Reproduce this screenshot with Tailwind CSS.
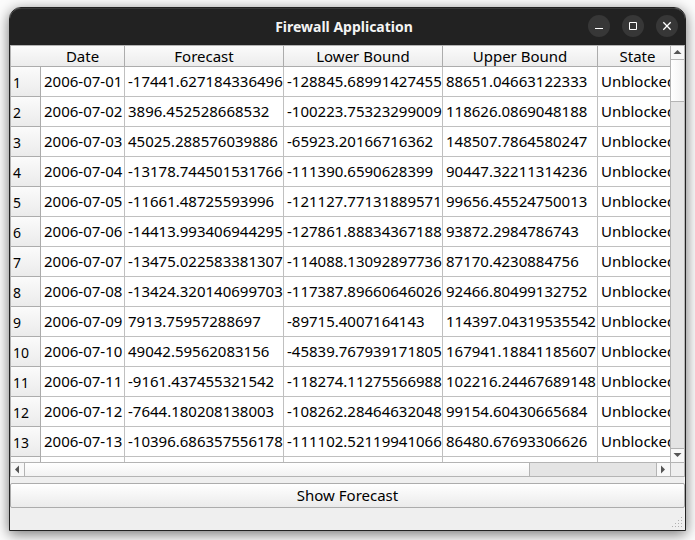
<!DOCTYPE html>
<html lang="en">
<head>
<meta charset="utf-8">
<title>Firewall Application</title>
<script src="https://cdn.jsdelivr.net/npm/@tailwindcss/browser@4"></script>
</head>
<body class="h-screen overflow-hidden bg-[#fcfcfc] pt-[7px] pr-[9px] pb-[9px] pl-[9px] font-['Noto_Sans',sans-serif] text-[15px] leading-5 text-black">
<main class="flex h-full flex-col rounded-t-xl border border-[#222222] bg-[#efefef] shadow-[0_3px_14px_rgba(0,0,0,0.55)]">
  <header class="grid h-[37px] shrink-0 grid-cols-[1fr_auto_1fr] items-center rounded-t-[11px] border-t border-[#383838] bg-[#222222] pr-[7px]">
    <h1 class="col-start-2 text-sm font-bold text-[#f4f4f4]">Firewall Application</h1>
    <div class="flex justify-end gap-3 pb-0.5">
      <button type="button" aria-label="Minimize" class="size-[22px] rounded-full bg-[#373737]"><svg viewBox="0 0 22 22" class="size-[22px]"><path d="M7 13.5h8" stroke="#fff" fill="none"/></svg></button>
      <button type="button" aria-label="Maximize" class="size-[22px] rounded-full bg-[#373737]"><svg viewBox="0 0 22 22" class="size-[22px]"><path d="M7.5 7.5h7v7h-7z" stroke="#fff" fill="none"/></svg></button>
      <button type="button" aria-label="Close" class="size-[22px] rounded-full bg-[#373737]"><svg viewBox="0 0 22 22" class="size-[22px]"><path d="M7.3 7.3l7.4 7.4M14.7 7.3l-7.4 7.4" stroke="#fff" stroke-width="1.3" fill="none"/></svg></button>
    </div>
  </header>

  <section class="grid min-h-0 flex-1 grid-cols-[minmax(0,1fr)_14px] grid-rows-[minmax(0,1fr)_14px] border border-[#b4b4b4]">
    <div class="overflow-hidden bg-white">
      <table class="w-[667px] table-fixed border-separate border-spacing-0 whitespace-nowrap">
        <colgroup><col class="w-[30px]"><col class="w-[84px]"><col class="w-[159px]"><col class="w-[159px]"><col class="w-[155px]"><col class="w-[80px]"></colgroup>
        <thead>
          <tr class="h-[21px] bg-linear-to-b from-[#fbfbfb] to-[#ebebeb] *:border-b *:border-[#acacac] *:p-0 *:font-normal">
            <td></td>
            <th scope="col" class="border-r">Date</th>
            <th scope="col" class="border-r">Forecast</th>
            <th scope="col" class="border-r">Lower Bound</th>
            <th scope="col" class="border-r">Upper Bound</th>
            <th scope="col" class="border-r">State</th>
          </tr>
        </thead>
        <tbody id="rows"></tbody>
      </table>
    </div>
    <div class="flex flex-col border-l border-[#b4b4b4] bg-[#e4e4e4]">
      <button type="button" aria-label="Scroll up" class="h-[14px] shrink-0 border-b border-[#b4b4b4] bg-[#f8f8f8]"><svg viewBox="0 0 13 13" class="size-[13px]"><path d="M2.5 8L6.5 4L10.5 8z" fill="#555"/></svg></button>
      <div class="grow-[41] border-b border-[#b4b4b4] bg-linear-to-r from-white to-[#f2f2f2]"></div>
      <div class="grow-[347]"></div>
      <button type="button" aria-label="Scroll down" class="h-[14px] shrink-0 border-t border-[#b4b4b4] bg-[#f8f8f8]"><svg viewBox="0 0 13 13" class="size-[13px]"><path d="M2.5 4L6.5 8L10.5 4z" fill="#555"/></svg></button>
    </div>
    <div class="flex border-t border-[#b4b4b4] bg-[#e4e4e4]">
      <button type="button" aria-label="Scroll left" class="w-[14px] shrink-0 border-r border-[#b4b4b4] bg-[#f8f8f8]"><svg viewBox="0 0 13 13" class="size-[13px]"><path d="M8 2.5L4 6.5L8 10.5z" fill="#555"/></svg></button>
      <div class="grow-[505] border-r border-[#b4b4b4] bg-linear-to-b from-white to-[#f2f2f2]"></div>
      <div class="grow-[126]"></div>
      <button type="button" aria-label="Scroll right" class="w-[14px] shrink-0 border-l border-[#b4b4b4] bg-[#f8f8f8]"><svg viewBox="0 0 13 13" class="size-[13px]"><path d="M4 2.5L8 6.5L4 10.5z" fill="#555"/></svg></button>
    </div>
    <div class="border-t border-l border-[#b4b4b4] bg-[#efefef]"></div>
  </section>

  <button type="button" class="mt-1.5 h-[25px] shrink-0 rounded-xs border border-[#acacac] bg-linear-to-b from-white to-[#ebebeb] pb-0.5">Show Forecast</button>

  <footer class="flex h-[22px] shrink-0 items-end justify-end pr-0.5 pb-0.5">
    <svg viewBox="0 0 11 11" class="size-[11px]" fill="#b0b0b0"><path d="M9 0h1v1h-1zM6 3h1v1h-1zM9 3h1v1h-1zM3 6h1v1h-1zM6 6h1v1h-1zM9 6h1v1h-1zM0 9h1v1h-1zM3 9h1v1h-1zM6 9h1v1h-1zM9 9h1v1h-1z"/></svg>
  </footer>
</main>
<script>
const data = [
  ["2006-07-01", "-17441.627184336496", "-128845.68991427455", "88651.04663122333"],
  ["2006-07-02", "3896.452528668532", "-100223.75323299009", "118626.0869048188"],
  ["2006-07-03", "45025.288576039886", "-65923.20166716362", "148507.7864580247"],
  ["2006-07-04", "-13178.744501531766", "-111390.6590628399", "90447.32211314236"],
  ["2006-07-05", "-11661.48725593996", "-121127.77131889571", "99656.45524750013"],
  ["2006-07-06", "-14413.993406944295", "-127861.88834367188", "93872.2984786743"],
  ["2006-07-07", "-13475.022583381307", "-114088.13092897736", "87170.4230884756"],
  ["2006-07-08", "-13424.320140699703", "-117387.89660646026", "92466.80499132752"],
  ["2006-07-09", "7913.75957288697", "-89715.4007164143", "114397.04319535542"],
  ["2006-07-10", "49042.59562083156", "-45839.767939171805", "167941.18841185607"],
  ["2006-07-11", "-9161.437455321542", "-118274.11275566988", "102216.24467689148"],
  ["2006-07-12", "-7644.180208138003", "-108262.28464632048", "99154.60430665684"],
  ["2006-07-13", "-10396.686357556178", "-111102.52119941066", "86480.67693306626"],
  null
];
document.getElementById("rows").innerHTML = data.map((row, i) => {
  const cells = row ? [...row, "Unblocked"] : ["", "", "", "", ""];
  return `<tr class="h-[30px]"><th scope="row" class="border-r border-b border-[#acacac] bg-linear-to-b from-[#fbfbfb] to-[#ebebeb] p-0 pt-0.5 pl-0.5 text-left text-sm font-normal">${row ? i + 1 : ""}</th>` +
    cells.map(c => `<td class="overflow-hidden border-r border-b border-[#c0c0c0] p-0 pb-0.5 pl-[3px]">${c}</td>`).join("") + "</tr>";
}).join("");
</script>
</body>
</html>
